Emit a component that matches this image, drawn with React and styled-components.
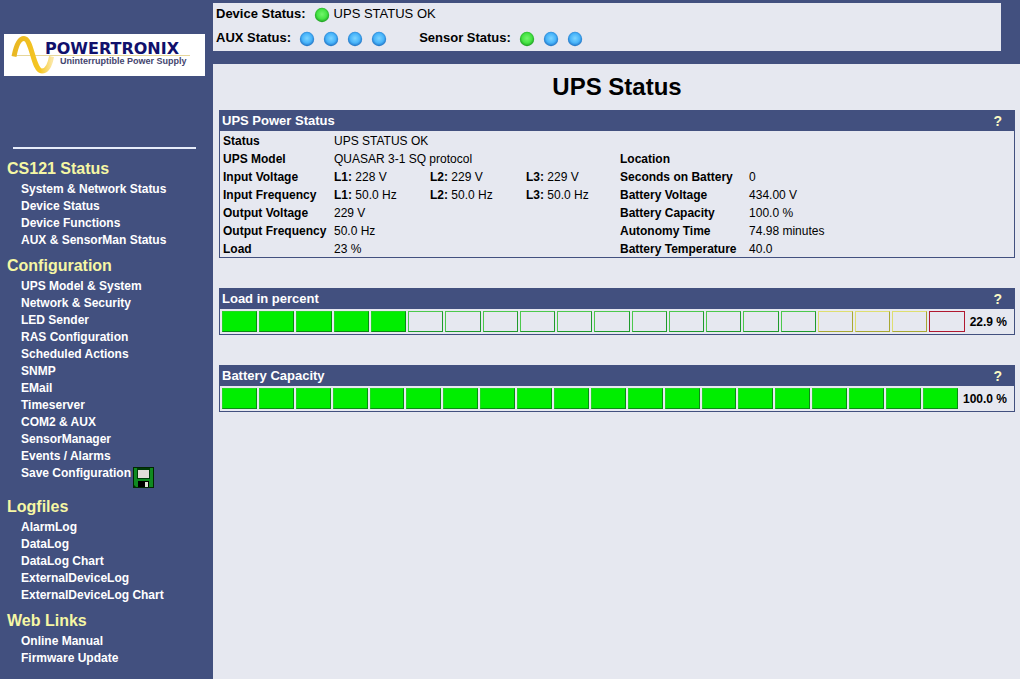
import React from 'react';
import styled, { createGlobalStyle } from 'styled-components';

const BLUE = '#42507f';
const PAPER = '#e6e8f0';

const GlobalStyle = createGlobalStyle`
  body {
    margin: 0;
    background: ${PAPER};
    color: #000;
    font-family: "Liberation Sans", Arial, sans-serif;
    font-size: 12px;
    line-height: 18px;
  }
`;

const Page = styled.div`
  display: grid;
  grid-template-columns: 213px 1fr;
  min-height: 100vh;
`;

const Sidebar = styled.nav`
  background: ${BLUE};
  padding-bottom: 12px;
`;

const LogoLink = styled.a`
  display: block;
  margin: 34px 8px 0 4px;
  height: 42px;
  background: #fff;

  svg {
    display: block;
  }
`;

const Divider = styled.hr`
  margin: 71px 17px 0 13px;
  border: 0;
  height: 2px;
  background: #e6ecfa;
`;

const NavSections = styled.div`
  display: flex;
  flex-direction: column;
  gap: 7px;
  padding: 10px 0 0 7px;
`;

const NavTitle = styled.h2`
  margin: 0 0 2px;
  color: #f6f7a4;
  font-size: 16px;
  font-weight: bold;
  line-height: 20px;
`;

const NavList = styled.ul`
  margin: 0;
  padding: 0 0 0 14px;
  list-style: none;
`;

const NavItem = styled.li`
  display: flex;
  align-items: flex-start;
  gap: 2px;
  line-height: 17px;
`;

const NavLink = styled.a`
  color: #fff;
  font-weight: bold;
  text-decoration: none;
`;

const SaveButton = styled.button`
  margin: 2px 0;
  padding: 0;
  border: 0;
  background: none;
  cursor: pointer;

  svg {
    display: block;
  }
`;

const Main = styled.main`
  display: flex;
  flex-direction: column;
`;

const TopBar = styled.header`
  background: ${BLUE};
  padding: 3px 19px 13px 0;
`;

const StatusPanel = styled.div`
  background: ${PAPER};
  padding: 0 3px;
  font-size: 13px;
`;

const StatusRow = styled.div`
  display: flex;
  align-items: center;
  height: ${(props) => props.$height};
`;

const StatusGroup = styled.div`
  display: flex;
  align-items: center;
  gap: 8px;
  margin-right: 32px;
`;

const Lights = styled.div`
  display: flex;
  gap: 8px;
  padding-top: 2px;

  svg {
    display: block;
  }
`;

const StatusText = styled.span`
  margin-left: -4px;
`;

const Content = styled.div`
  padding: 8px 5px 0 6px;
`;

const Title = styled.h1`
  margin: 0 0 8px;
  text-align: center;
  font-size: 24px;
  line-height: 30px;
`;

const Panel = styled.section`
  margin-bottom: 30px;
  border: 1px solid ${BLUE};
`;

const PanelHead = styled.div`
  display: flex;
  justify-content: space-between;
  align-items: center;
  padding: 0 12px 0 2px;
  background: ${BLUE};
  color: #fff;
  line-height: 20px;
`;

const PanelTitle = styled.h3`
  margin: 0;
  font-size: 13px;
`;

const HelpLink = styled.a`
  color: #fbf9c4;
  font-size: 14px;
  font-weight: bold;
  text-decoration: none;
`;

const Readings = styled.table`
  width: 100%;
  border-collapse: collapse;
  table-layout: fixed;

  th,
  td {
    padding: 2px 0 0;
    text-align: left;
    line-height: 16px;
    white-space: nowrap;
  }

  th {
    padding-left: 3px;
  }
`;

const Gauge = styled.div`
  display: flex;
  align-items: center;
  gap: 5px;
  padding: 2px 7px 2px 2px;
`;

const Cells = styled.div`
  display: flex;
  flex: 1;
  gap: 2px;
`;

const Cell = styled.div`
  flex: 1;
  height: 19px;
  border: 1px solid;
  border-color: ${(props) => (props.$on ? '#22d822 #0a8a14 #0a8a14 #22d822' : props.$edge)};
  background: ${(props) => (props.$on ? '#00ee00' : 'transparent')};
`;

const GaugeValue = styled.b`
  white-space: nowrap;
`;

const NAV = [
  {
    title: 'CS121 Status',
    items: ['System & Network Status', 'Device Status', 'Device Functions', 'AUX & SensorMan Status'],
  },
  {
    title: 'Configuration',
    items: [
      'UPS Model & System',
      'Network & Security',
      'LED Sender',
      'RAS Configuration',
      'Scheduled Actions',
      'SNMP',
      'EMail',
      'Timeserver',
      'COM2 & AUX',
      'SensorManager',
      'Events / Alarms',
      'Save Configuration',
    ],
  },
  {
    title: 'Logfiles',
    items: ['AlarmLog', 'DataLog', 'DataLog Chart', 'ExternalDeviceLog', 'ExternalDeviceLog Chart'],
  },
  {
    title: 'Web Links',
    items: ['Online Manual', 'Firmware Update'],
  },
];

const phases = (a, b, c) => [['L1:', a], ['L2:', b], ['L3:', c]];

const READINGS = [
  { label: 'Status', value: 'UPS STATUS OK' },
  { label: 'UPS Model', value: 'QUASAR 3-1 SQ protocol', label2: 'Location', value2: '' },
  { label: 'Input Voltage', phases: phases('228 V', '229 V', '229 V'), label2: 'Seconds on Battery', value2: '0' },
  { label: 'Input Frequency', phases: phases('50.0 Hz', '50.0 Hz', '50.0 Hz'), label2: 'Battery Voltage', value2: '434.00 V' },
  { label: 'Output Voltage', value: '229 V', label2: 'Battery Capacity', value2: '100.0 %' },
  { label: 'Output Frequency', value: '50.0 Hz', label2: 'Autonomy Time', value2: '74.98 minutes' },
  { label: 'Load', value: '23 %', label2: 'Battery Temperature', value2: '40.0' },
];

const GREEN_EDGE = '#4cc84c #1f9a2c #1f9a2c #4cc84c';
const YELLOW_EDGE = '#dede70 #a8a832 #a8a832 #dede70';
const RED_EDGE = '#b01830';

const Logo = () => (
  <svg width="100%" height="42" viewBox="0 0 201 42" preserveAspectRatio="xMinYMid meet" role="img" aria-label="Powertronix">
    <defs>
      <linearGradient id="wave" x1="0" y1="0" x2="1" y2="0">
        <stop offset="0" stopColor="#e9b722" />
        <stop offset="0.7" stopColor="#f6c722" />
        <stop offset="1" stopColor="#fbe6a0" />
      </linearGradient>
    </defs>
    <path d="M9 21.5H186" stroke="#e6d69a" strokeWidth="1" />
    <path
      d="M10 22.5C12 12 15 4.5 20 4.5C28 4.5 29 37 38 37C43 37 46 31 47.5 22.5"
      fill="none"
      stroke="url(#wave)"
      strokeWidth="5"
    />
    <text x="41" y="20" fontFamily="DejaVu Sans" fontSize="16" fontWeight="bold" fill="#10106c">
      POWERTRONIX
    </text>
    <text x="56" y="30" fontFamily="Liberation Sans" fontSize="9" fontWeight="bold" fill="#44446e">
      Uninterruptible Power Supply
    </text>
  </svg>
);

const Floppy = () => (
  <svg width="21" height="21" viewBox="0 0 21 21" aria-hidden="true">
    <rect width="21" height="21" fill="#002800" />
    <path d="M1 1H20V20H3L1 18Z" fill="#108a20" />
    <rect x="4" y="1" width="13" height="11" fill="#003a08" />
    <rect x="5" y="3" width="11" height="8" fill="#e4dcd8" />
    <rect x="5" y="14" width="11" height="6" fill="#000" />
    <rect x="12" y="15" width="3" height="5" fill="#e0e4d8" />
  </svg>
);

const Light = ({ color }) => {
  const green = color === 'green';
  const id = `light-${color}`;
  return (
    <svg width="16" height="16" viewBox="0 0 16 16" role="img" aria-label={green ? 'Active' : 'Inactive'}>
      <defs>
        <radialGradient id={id} cx="0.5" cy="0.45" r="0.6">
          <stop offset="0" stopColor={green ? '#74f46c' : '#7cd4ff'} />
          <stop offset="0.55" stopColor={green ? '#46e444' : '#48b4fa'} />
          <stop offset="1" stopColor={green ? '#128a18' : '#1660b4'} />
        </radialGradient>
      </defs>
      <circle cx="8" cy="8" r="7.2" fill={`url(#${id})`} />
    </svg>
  );
};

const PowerPanel = () => (
  <Panel>
    <PanelHead>
      <PanelTitle>UPS Power Status</PanelTitle>
      <HelpLink href="#help">?</HelpLink>
    </PanelHead>
    <Readings>
      <colgroup>
        <col width="114" />
        <col width="96" />
        <col width="96" />
        <col width="91" />
        <col width="132" />
        <col />
      </colgroup>
      <tbody>
        {READINGS.map((row) => (
          <tr key={row.label}>
            <th scope="row">{row.label}</th>
            {row.phases ? (
              row.phases.map(([name, value]) => (
                <td key={name}>
                  <b>{name}</b> {value}
                </td>
              ))
            ) : (
              <td colSpan="3">{row.value}</td>
            )}
            {row.label2 ? <th scope="row">{row.label2}</th> : <td />}
            <td>{row.value2}</td>
          </tr>
        ))}
      </tbody>
    </Readings>
  </Panel>
);

const GaugePanel = ({ title, value, filled, edges }) => (
  <Panel>
    <PanelHead>
      <PanelTitle>{title}</PanelTitle>
      <HelpLink href="#help">?</HelpLink>
    </PanelHead>
    <Gauge>
      <Cells>
        {edges.map((edge, i) => (
          <Cell key={i} $edge={edge} $on={i < filled} />
        ))}
      </Cells>
      <GaugeValue>{value}</GaugeValue>
    </Gauge>
  </Panel>
);

const loadEdges = [...Array(16).fill(GREEN_EDGE), ...Array(3).fill(YELLOW_EDGE), RED_EDGE];
const batteryEdges = Array(20).fill(GREEN_EDGE);

const App = () => (
  <>
    <GlobalStyle />
    <Page>
      <Sidebar>
        <LogoLink href="#home">
          <Logo />
        </LogoLink>
        <Divider />
        <NavSections>
          {NAV.map((section) => (
            <section key={section.title}>
              <NavTitle>{section.title}</NavTitle>
              <NavList>
                {section.items.map((item) => (
                  <NavItem key={item}>
                    <NavLink href="#page">{item}</NavLink>
                    {item === 'Save Configuration' && (
                      <SaveButton type="button" aria-label="Save">
                        <Floppy />
                      </SaveButton>
                    )}
                  </NavItem>
                ))}
              </NavList>
            </section>
          ))}
        </NavSections>
      </Sidebar>
      <Main>
        <TopBar>
          <StatusPanel>
            <StatusRow $height="21px">
              <StatusGroup>
                <b>Device Status:</b>
                <Lights>
                  <Light color="green" />
                </Lights>
                <StatusText>UPS STATUS OK</StatusText>
              </StatusGroup>
            </StatusRow>
            <StatusRow $height="27px">
              <StatusGroup>
                <b>AUX Status:</b>
                <Lights>
                  <Light color="blue" />
                  <Light color="blue" />
                  <Light color="blue" />
                  <Light color="blue" />
                </Lights>
              </StatusGroup>
              <StatusGroup>
                <b>Sensor Status:</b>
                <Lights>
                  <Light color="green" />
                  <Light color="blue" />
                  <Light color="blue" />
                </Lights>
              </StatusGroup>
            </StatusRow>
          </StatusPanel>
        </TopBar>
        <Content>
          <Title>UPS Status</Title>
          <PowerPanel />
          <GaugePanel title="Load in percent" value="22.9 %" filled={5} edges={loadEdges} />
          <GaugePanel title="Battery Capacity" value="100.0 %" filled={20} edges={batteryEdges} />
        </Content>
      </Main>
    </Page>
  </>
);

export default App;
